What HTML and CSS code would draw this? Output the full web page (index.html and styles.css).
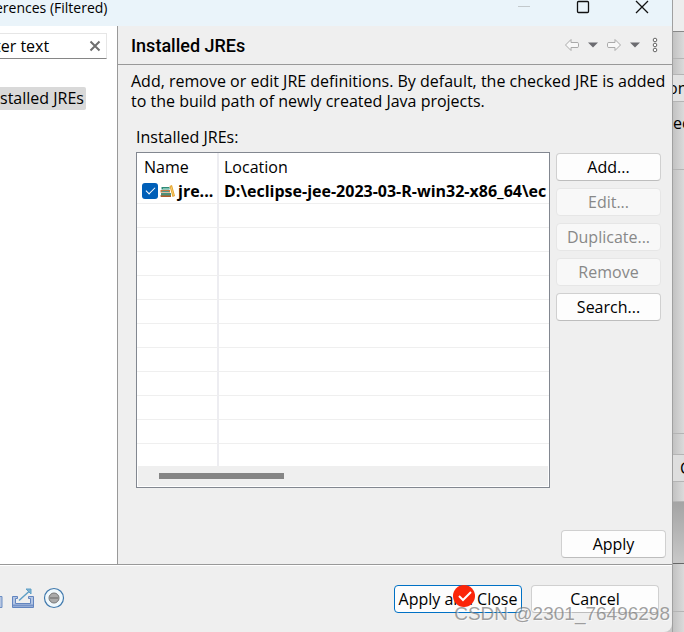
FILE: index.html
```html
<!DOCTYPE html>
<html lang="en">
<head>
    <meta charset="UTF-8">
    <meta name="viewport" content="width=device-width, initial-scale=1.0">
    <title>Preferences (Filtered)</title>
    <link rel="stylesheet" href="styles.css">
</head>
<body>
    <div class="dialog">
        <header class="titlebar">
            <span class="title">erences (Filtered)</span>
            <div class="window-buttons">
                <button class="icon-button" aria-label="Minimize">
                    <svg width="14" height="14" viewBox="0 0 14 14"><path d="M1 6.5h12" stroke="#c3c9cc"/></svg>
                </button>
                <button class="icon-button" aria-label="Maximize">
                    <svg width="14" height="14" viewBox="0 0 14 14"><rect x="1.5" y="1.5" width="11" height="11" rx="1" fill="none" stroke="#111" stroke-width="1.3"/></svg>
                </button>
                <button class="icon-button" aria-label="Close">
                    <svg width="14" height="14" viewBox="0 0 14 14"><path d="M1 1l12 12M13 1L1 13" stroke="#111" stroke-width="1.3"/></svg>
                </button>
            </div>
        </header>

        <div class="content">
            <aside class="sidebar">
                <div class="filter">
                    <input class="filter-input" type="text" value="ter text" aria-label="Filter">
                    <button class="icon-button" aria-label="Clear">
                        <svg width="12" height="12" viewBox="0 0 12 12"><path d="M1.5 1.5l9 9M10.5 1.5l-9 9" stroke="#6e6e6e" stroke-width="2"/></svg>
                    </button>
                </div>
                <div class="tree-item">stalled JREs</div>
            </aside>

            <main class="page">
                <div class="page-header">
                    <h1>Installed JREs</h1>
                    <div class="nav">
                        <button class="icon-button" aria-label="Back">
                            <svg width="16" height="14" viewBox="0 0 16 14"><path d="M1.5 7l5.500-5.500v3h6q1.500 0 1.500 1v3q0 1-1.500 1h-6v3z" fill="#f8f8f8" stroke="#aaa" stroke-linejoin="round"/></svg>
                        </button>
                        <button class="icon-button" aria-label="Back history">
                            <svg width="10" height="6" viewBox="0 0 10 6"><path d="M0 .5h10L5 5.500z" fill="#6b6b70"/></svg>
                        </button>
                        <button class="icon-button" aria-label="Forward">
                            <svg width="16" height="14" viewBox="0 0 16 14"><path d="M14.500 7L9 1.500v3H3q-1.500 0-1.500 1v3q0 1 1.500 1h6v3z" fill="#f8f8f8" stroke="#aaa" stroke-linejoin="round"/></svg>
                        </button>
                        <button class="icon-button" aria-label="Forward history">
                            <svg width="10" height="6" viewBox="0 0 10 6"><path d="M0 .5h10L5 5.500z" fill="#6b6b70"/></svg>
                        </button>
                        <button class="icon-button menu" aria-label="Menu">
                            <svg width="6" height="16" viewBox="0 0 6 16" fill="#fff" stroke="#666"><circle cx="3" cy="3" r="1.800"/><circle cx="3" cy="8" r="1.800"/><circle cx="3" cy="13" r="1.800"/></svg>
                        </button>
                    </div>
                </div>

                <p class="description">Add, remove or edit JRE definitions. By default, the checked JRE is added to the build path of newly created Java projects.</p>

                <div class="jres">
                    <div class="label" id="jre-label">Installed JREs:</div>
                    <div class="jres-row">
                        <div class="table-box">
                            <table class="jre-table" aria-labelledby="jre-label">
                                <thead>
                                    <tr><th class="name">Name</th><th>Location</th></tr>
                                </thead>
                                <tbody>
                                    <tr class="selected">
                                        <td>
                                            <div class="jre-name">
                                                <input class="check" type="checkbox" id="jre" checked>
                                                <svg width="16" height="14" viewBox="0 0 16 14">
                                                    <path d="M1.500 3h8v2.500h-8z" fill="#2f8a78"/><path d="M3 4h6v1H3z" fill="#7cc4b0"/>
                                                    <path d="M.5 6h9.500v2.500H.5z" fill="#c07a45"/><path d="M2 7h7v1H2z" fill="#4f9a8c"/>
                                                    <path d="M1 9h10v3H1z" fill="#4f8f78"/><path d="M0 11.500h11v1.500H1z" fill="#b05a28"/>
                                                    <path d="M9.500 2l2.500-1 3 11-2.500 1z" fill="#e3a22c"/><path d="M11 2.500l2.500 9" stroke="#f7cf72"/>
                                                </svg>
                                                <label for="jre">jre...</label>
                                            </div>
                                        </td>
                                        <td>D:\eclipse-jee-2023-03-R-win32-x86_64\ec</td>
                                    </tr>
                                    <tr><td></td><td></td></tr>
                                    <tr><td></td><td></td></tr>
                                    <tr><td></td><td></td></tr>
                                    <tr><td></td><td></td></tr>
                                    <tr><td></td><td></td></tr>
                                    <tr><td></td><td></td></tr>
                                    <tr><td></td><td></td></tr>
                                    <tr><td></td><td></td></tr>
                                    <tr><td></td><td></td></tr>
                                    <tr><td></td><td></td></tr>
                                    <tr class="last"><td></td><td></td></tr>
                                </tbody>
                            </table>
                            <div class="scrollbar"><div class="thumb"></div></div>
                        </div>
                        <div class="actions">
                            <button class="btn">Add...</button>
                            <button class="btn" disabled>Edit...</button>
                            <button class="btn" disabled>Duplicate...</button>
                            <button class="btn" disabled>Remove</button>
                            <button class="btn">Search...</button>
                        </div>
                    </div>
                </div>

                <div class="apply-row">
                    <button class="btn">Apply</button>
                </div>
            </main>
        </div>

        <footer class="footer">
            <div class="tools">
                <button class="icon-button" aria-label="Import">
                    <svg width="3" height="22" viewBox="0 0 3 22"><path d="M0 9.500h2v11H0" fill="#b6c6e2" stroke="#6d8fc4"/></svg>
                </button>
                <button class="icon-button" aria-label="Export">
                    <svg width="24" height="22" viewBox="0 0 24 22">
                        <path d="M1.500 9.500h5v2h-2v5h15v-5h-2v-2h5v11h-21z" fill="#b3c5e4" stroke="#6285bf"/>
                        <path d="M2 18.500h20" stroke="#7593c8" stroke-width="2"/>
                        <path d="M8 13.500L18 4.500" stroke="#5f9fc6" stroke-width="1.500"/>
                        <path d="M15 2h5v5z" fill="#7db2d2" stroke="#5f9fc6"/>
                    </svg>
                </button>
                <button class="icon-button" aria-label="Record">
                    <svg width="22" height="22" viewBox="0 0 22 22">
                        <circle cx="11" cy="11" r="9.500" fill="#f0f8fc" stroke="#4079ad" stroke-width="1.200"/>
                        <circle cx="11" cy="11" r="5" fill="#aaa" stroke="#777"/>
                        <path d="M7 11h8" stroke="#888" stroke-width="2"/>
                    </svg>
                </button>
            </div>
            <div class="footer-buttons">
                <button class="btn wide primary">Apply and Close
                    <svg class="marker" width="22" height="22" viewBox="0 0 22 22"><circle cx="11" cy="11" r="11" fill="#fb2509"/><path d="M6 11l4 4 8-8" fill="none" stroke="#fff" stroke-width="2"/></svg>
                </button>
                <button class="btn wide">Cancel</button>
            </div>
            <div class="watermark">CSDN @2301_76496298</div>
        </footer>
    </div>

    <!-- edge of the window behind the dialog -->
    <div class="behind">
        <div class="behind-top"></div>
        <div class="behind-bar"></div>
        <div class="behind-gap"></div>
        <div class="behind-button">on</div>
        <div class="behind-list">ec</div>
        <div class="behind-body"></div>
        <div class="behind-foot"></div>
        <div class="behind-cancel">C</div>
        <div class="behind-end"></div>
        <div class="behind-shadow"></div>
        <div class="behind-desk"></div>
        <div class="behind-last"></div>
    </div>
</body>
</html>
```
FILE: styles.css
```css
* {
    box-sizing: border-box;
}
body {
    margin: 0;
    min-height: 100vh;
    display: flex;
    overflow: hidden;
    background: #c8c8c8;
    color: #000;
    font: 16px/20px "Open Sans", "Noto Sans", sans-serif;
}
button, input {
    font: inherit;
    color: inherit;
}
.dialog {
    flex: 1;
    min-width: 0;
    display: flex;
    flex-direction: column;
    background: #efefef;
    border-bottom-right-radius: 8px;
    overflow: hidden;
}
.icon-button {
    display: flex;
    padding: 0;
    border: none;
    background: none;
}

/* title bar */
.titlebar {
    height: 26px;
    display: flex;
    justify-content: space-between;
    background: #eaf4fa;
}
.title {
    font-size: 14px;
    line-height: 16px;
    text-indent: -5px;
}
.window-buttons {
    display: flex;
    gap: 45px;
    padding-right: 23px;
}

.content {
    flex: 1;
    display: flex;
    border-bottom: 1px solid #999;
}

/* left side */
.sidebar {
    width: 118px;
    padding-top: 7px;
    background: #fff;
    border-right: 1px solid #999;
}
.filter {
    display: flex;
    align-items: center;
    width: 107px;
    height: 26px;
    padding-right: 5px;
    border: 1px solid #e6e6e6;
    border-left: none;
    border-bottom-color: #868686;
}
.filter-input {
    flex: 1;
    min-width: 0;
    padding: 0;
    border: none;
    outline: none;
    background: none;
    text-indent: -5px;
}
.tree-item {
    width: 86px;
    margin-top: 28px;
    padding: 1px 0 2px;
    background: #d9d9d9;
    border-radius: 0 2px 2px 0;
}

/* page */
.page {
    flex: 1;
    min-width: 0;
    display: flex;
    flex-direction: column;
}
.page-header {
    height: 39px;
    display: flex;
    align-items: center;
    justify-content: space-between;
    padding: 0 14px 0 13px;
    border-bottom: 1px solid #999;
}
h1 {
    margin: 0;
    padding-top: 2px;
    font: 500 18px/20px Roboto, sans-serif;
}
.nav {
    display: flex;
    align-items: center;
    gap: 8px;
}
.menu {
    margin-left: 4px;
}
.description {
    margin: 0;
    padding: 6px 5px 0 13px;
}
.jres {
    padding: 16px 11px 0 18px;
}
.jres-row {
    display: flex;
    align-items: flex-start;
    gap: 6px;
    margin-top: 5px;
}
.table-box {
    flex: 1;
    min-width: 0;
    background: #fff;
    border: 1px solid #828790;
}
.jre-table {
    width: 100%;
    table-layout: fixed;
    border-collapse: separate;
    border-spacing: 0;
}
.jre-table th, .jre-table td {
    height: 24px;
    padding: 0 0 2px 5px;
    overflow: hidden;
    white-space: nowrap;
    text-align: left;
    font-weight: normal;
    border-bottom: 1px solid #efefef;
}
.jre-table th:first-child, .jre-table td:first-child {
    border-right: 2px solid #ededf1;
}
.jre-table th {
    height: 27px;
    padding: 2px 0 2px 5px;
    border-bottom: none;
}
.jre-table th.name {
    width: 82px;
    padding-left: 7px;
}
.jre-table .selected td {
    font-weight: bold;
}
.jre-table .last td {
    height: 22px;
    border-bottom: none;
}
.jre-name {
    display: flex;
    align-items: center;
    gap: 2px;
}
.check {
    appearance: none;
    flex: none;
    width: 16px;
    height: 16px;
    margin: 0;
    display: grid;
    place-items: center;
    border-radius: 3px;
    background: #005fb8;
}
.check:checked::before {
    content: "";
    width: 8px;
    height: 4px;
    margin-bottom: 2px;
    border: solid #fff;
    border-width: 0 0 1px 1px;
    transform: rotate(-45deg);
}
.scrollbar {
    height: 20px;
    margin: 0 1px 1px;
    padding: 7px 21px;
    background: #efefef;
}
.thumb {
    width: 125px;
    height: 6px;
    background: #858585;
}

/* buttons */
.btn {
    width: 105px;
    height: 28px;
    padding: 0;
    line-height: 20px;
    background: #fdfdfd;
    border: 1px solid #d0d0d0;
    border-bottom-color: #bdbdbd;
    border-radius: 4px;
}
.btn:disabled {
    color: #888;
    background: #f8f8f8;
    border-color: #e6e6e6;
}
.btn.wide {
    width: 128px;
}
.btn.primary {
    position: relative;
    border-color: #0071c5;
}
.marker {
    position: absolute;
    top: -1px;
    left: 58px;
}
.actions {
    display: flex;
    flex-direction: column;
    gap: 7px;
    padding-top: 1px;
}
.apply-row {
    display: flex;
    justify-content: flex-end;
    margin-top: auto;
    padding: 0 6px 6px 0;
}

/* footer */
.footer {
    position: relative;
    height: 67px;
    display: flex;
    justify-content: space-between;
    padding: 19px 13px 0 0;
    border-top: 1px solid #fff;
}
.tools {
    display: flex;
    gap: 8px;
    height: 26px;
    align-items: center;
}
.footer-buttons {
    display: flex;
    gap: 9px;
}
.watermark {
    position: absolute;
    right: 2px;
    bottom: 8px;
    font: 19px/20px "Liberation Sans", Arial, sans-serif;
    color: rgba(120, 120, 120, 0.7);
    text-shadow: 1px 1px 0 rgba(255, 255, 255, 0.5);
    pointer-events: none;
}

/* window behind */
.behind {
    width: 12px;
    display: flex;
    flex-direction: column;
    overflow: hidden;
    border-left: 1px solid #a0a0a0;
    background: linear-gradient(to right, #c2c2c2, #dadada);
}
.behind > div {
    flex: none;
    border-bottom: 1px solid #b4b4b4;
}
.behind .behind-top {
    height: 32px;
    background: #ededed;
    border-color: #888;
}
.behind-bar {
    height: 27px;
}
.behind-gap {
    height: 16px;
}
.behind-button {
    height: 27px;
    padding-top: 3px;
    background: #e2e2e2;
    text-indent: -5px;
}
.behind-list {
    height: 68px;
    padding-top: 11px;
}
.behind-body {
    height: 264px;
}
.behind-foot {
    height: 21px;
}
.behind-cancel {
    height: 27px;
    padding-top: 3px;
    padding-left: 7px;
    background: #dedede;
}
.behind-end {
    height: 20px;
}
.behind .behind-shadow {
    height: 62px;
    background: linear-gradient(#a4a4a4, #c8c8c8);
    border-color: #666;
}
.behind-desk {
    height: 48px;
}
.behind .behind-last {
    flex: 1;
    border: none;
}
```
